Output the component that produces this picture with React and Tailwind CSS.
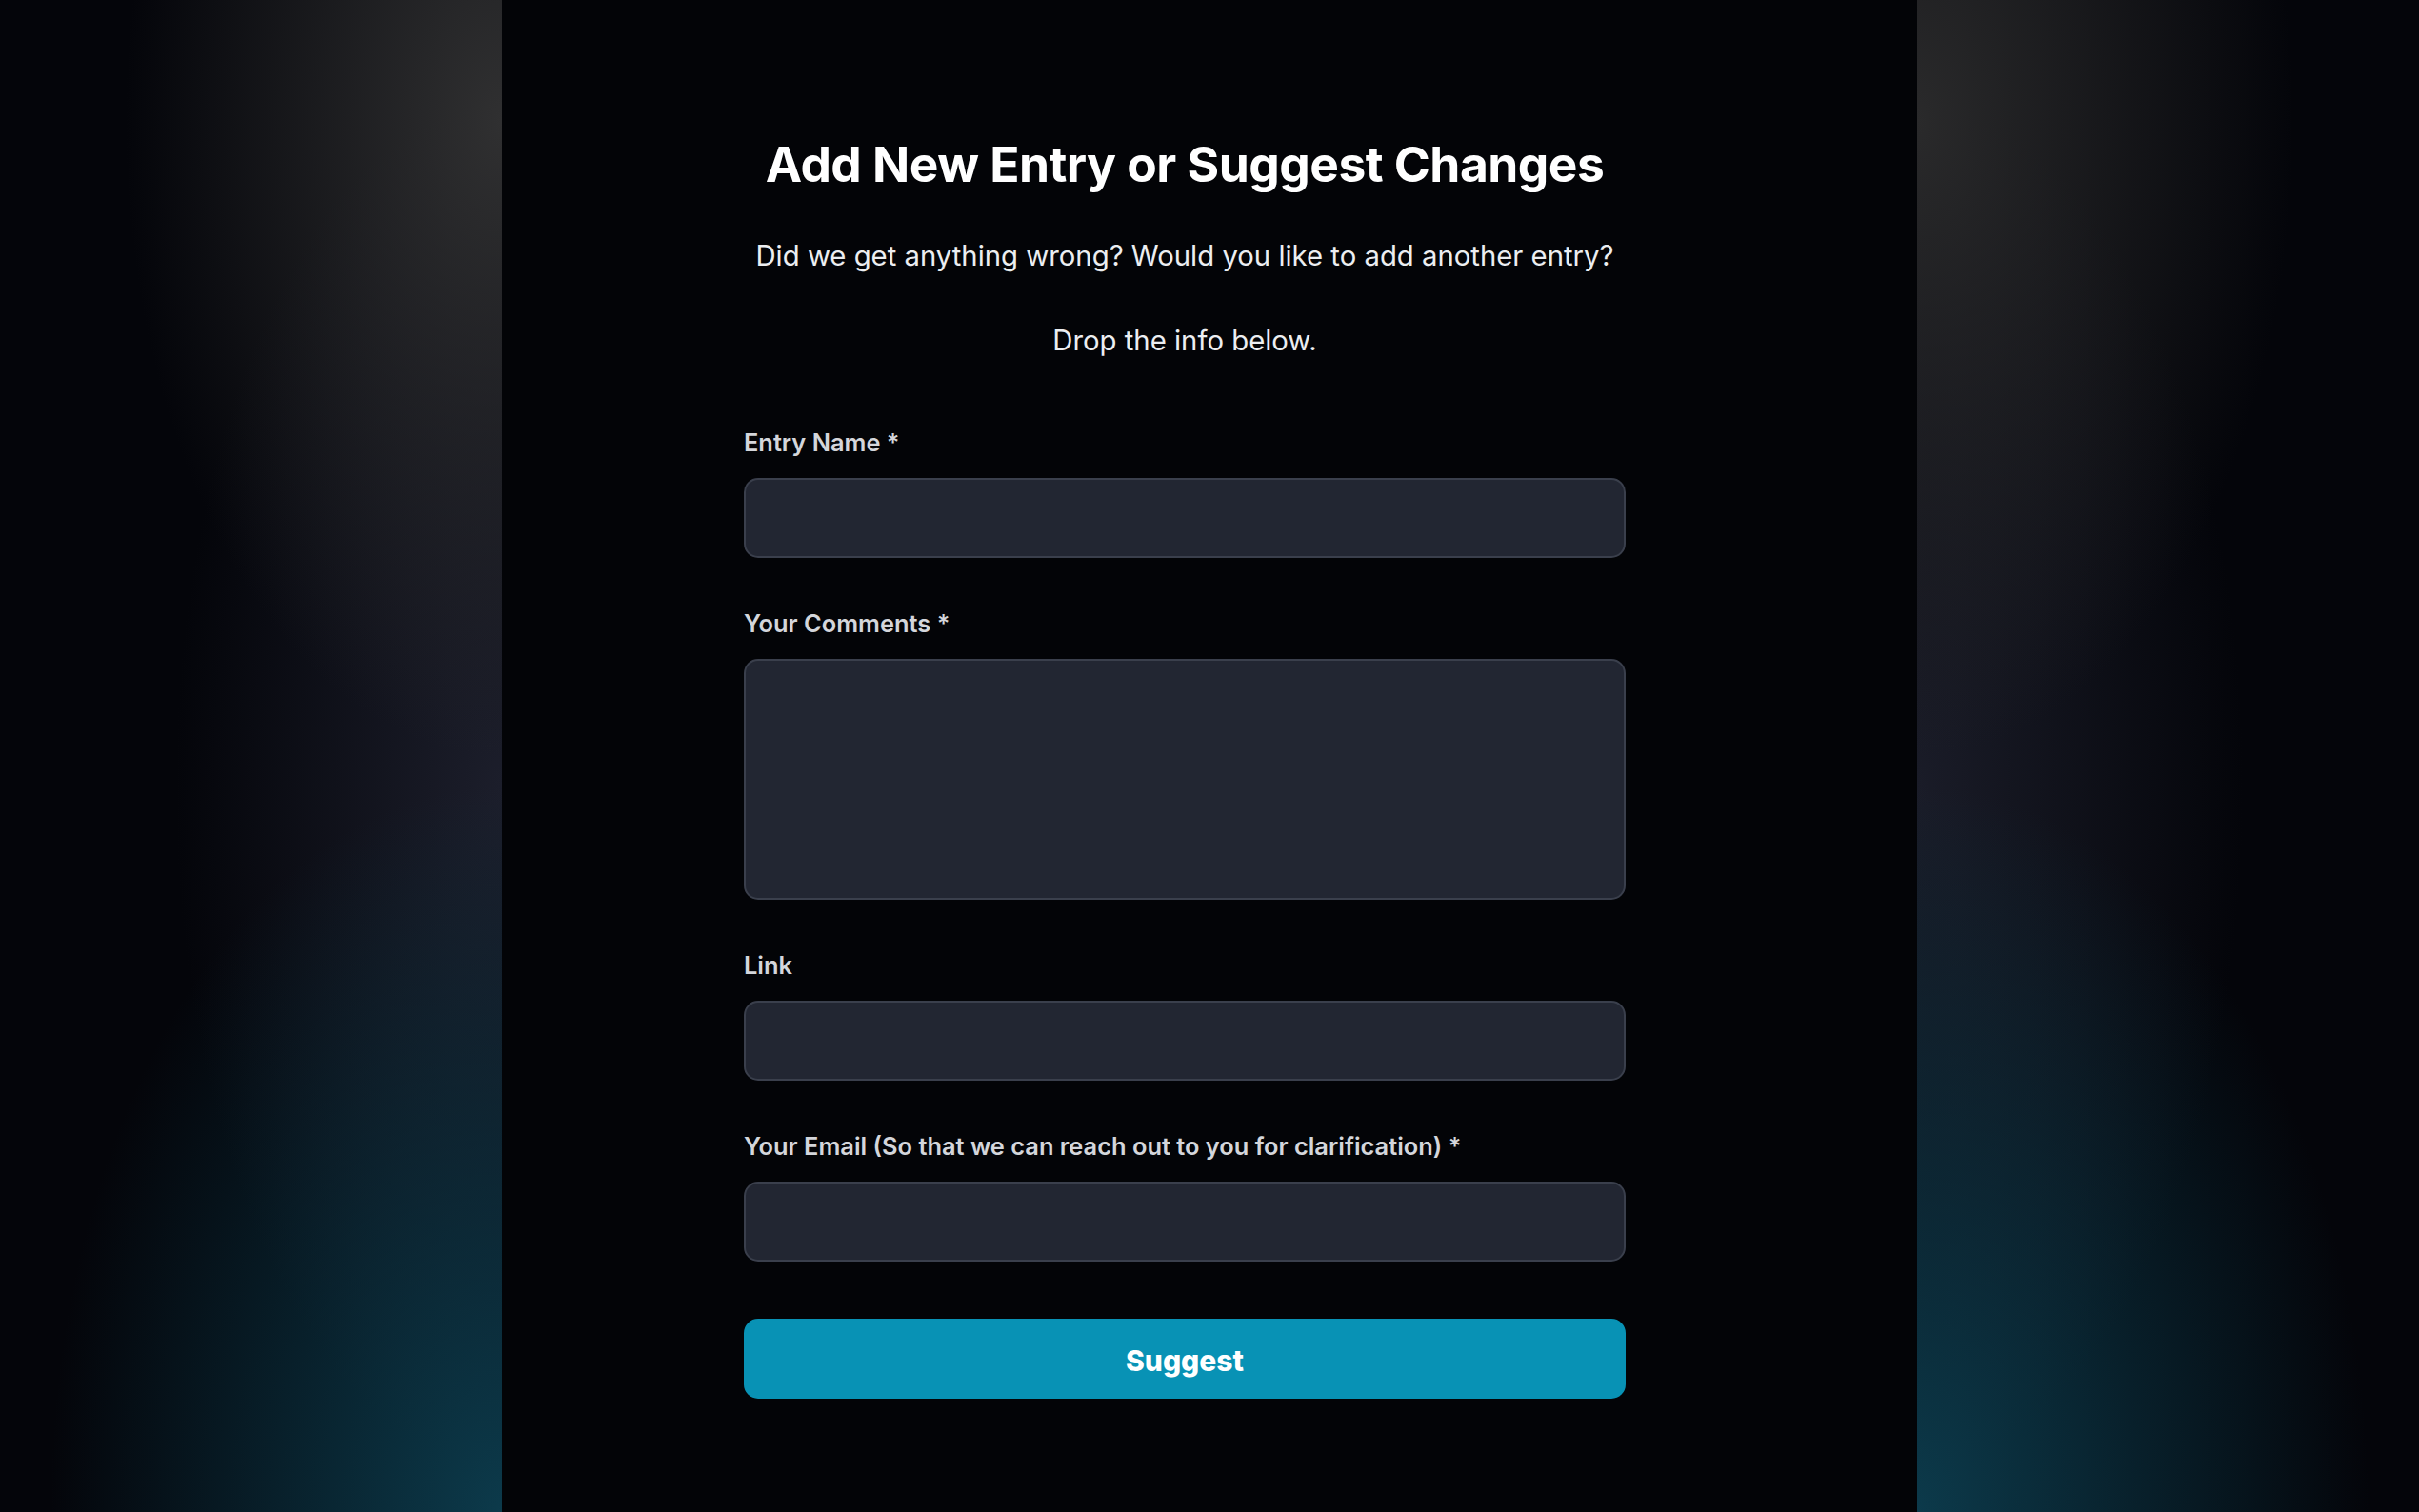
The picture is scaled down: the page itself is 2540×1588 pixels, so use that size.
import React from 'react';

const SidePanel = ({ side }) => (
  <div
    className={
      side === 'left'
        ? 'w-[527px] h-full bg-[#04050a] bg-[image:radial-gradient(ellipse_75%_42%_at_100%_8%,#303031,transparent),radial-gradient(ellipse_90%_48%_at_100%_100%,#0c3a4b,transparent),radial-gradient(ellipse_65%_45%_at_100%_52%,#1c1e2b,transparent)]'
        : 'w-[527px] h-full bg-[#04050a] bg-[image:radial-gradient(ellipse_75%_42%_at_0%_8%,#2a2a2b,transparent),radial-gradient(ellipse_90%_48%_at_0%_100%,#0c3a4b,transparent),radial-gradient(ellipse_65%_45%_at_0%_52%,#1a1c28,transparent)]'
    }
  />
);

const Field = ({ label, children }) => (
  <div className="flex flex-col gap-[19px]">
    <label className="text-[25.4px] leading-[36px] font-semibold text-[#d4d6db]">{label}</label>
    {children}
  </div>
);

const inputCls = 'w-full h-[84px] rounded-[15px] bg-[#222632] border-2 border-[#3a3f4c] px-5 text-[24px] text-white outline-none';

export default function App() {
  return (
    <div className="flex w-full h-[1588px] overflow-hidden font-['Inter',sans-serif] bg-[#030407]">
      <SidePanel side="left" />

      <main className="flex-1 h-full bg-[#030407] pl-[254px] pt-[142px]">
        <div className="w-[926px] flex flex-col">
          <h1 className="text-[51.5px] leading-[60px] font-bold text-white text-center tracking-[-0.01em]">
            Add New Entry or Suggest Changes
          </h1>
          <p className="mt-[45px] text-[29.3px] leading-[44px] text-[#eceef1] text-center">
            Did we get anything wrong? Would you like to add another entry?
          </p>
          <p className="mt-[45px] text-[29.3px] leading-[44px] text-[#eceef1] text-center">
            Drop the info below.
          </p>

          <form className="mt-[67px] flex flex-col gap-[51px]" onSubmit={(e) => e.preventDefault()}>
            <Field label="Entry Name *">
              <input type="text" className={inputCls} />
            </Field>
            <Field label="Your Comments *">
              <textarea className="w-full h-[253px] rounded-[15px] bg-[#222632] border-2 border-[#3a3f4c] px-5 py-4 text-[24px] text-white outline-none resize-none" />
            </Field>
            <Field label="Link">
              <input type="text" className={inputCls} />
            </Field>
            <Field label="Your Email (So that we can reach out to you for clarification) *">
              <input type="email" className={inputCls} />
            </Field>
            <button
              type="submit"
              className="mt-[9px] w-full h-[84px] pt-[5px] rounded-[15px] bg-[#0892b5] text-white text-[30px] font-extrabold"
            >
              Suggest
            </button>
          </form>
        </div>
      </main>

      <SidePanel side="right" />
    </div>
  );
}
